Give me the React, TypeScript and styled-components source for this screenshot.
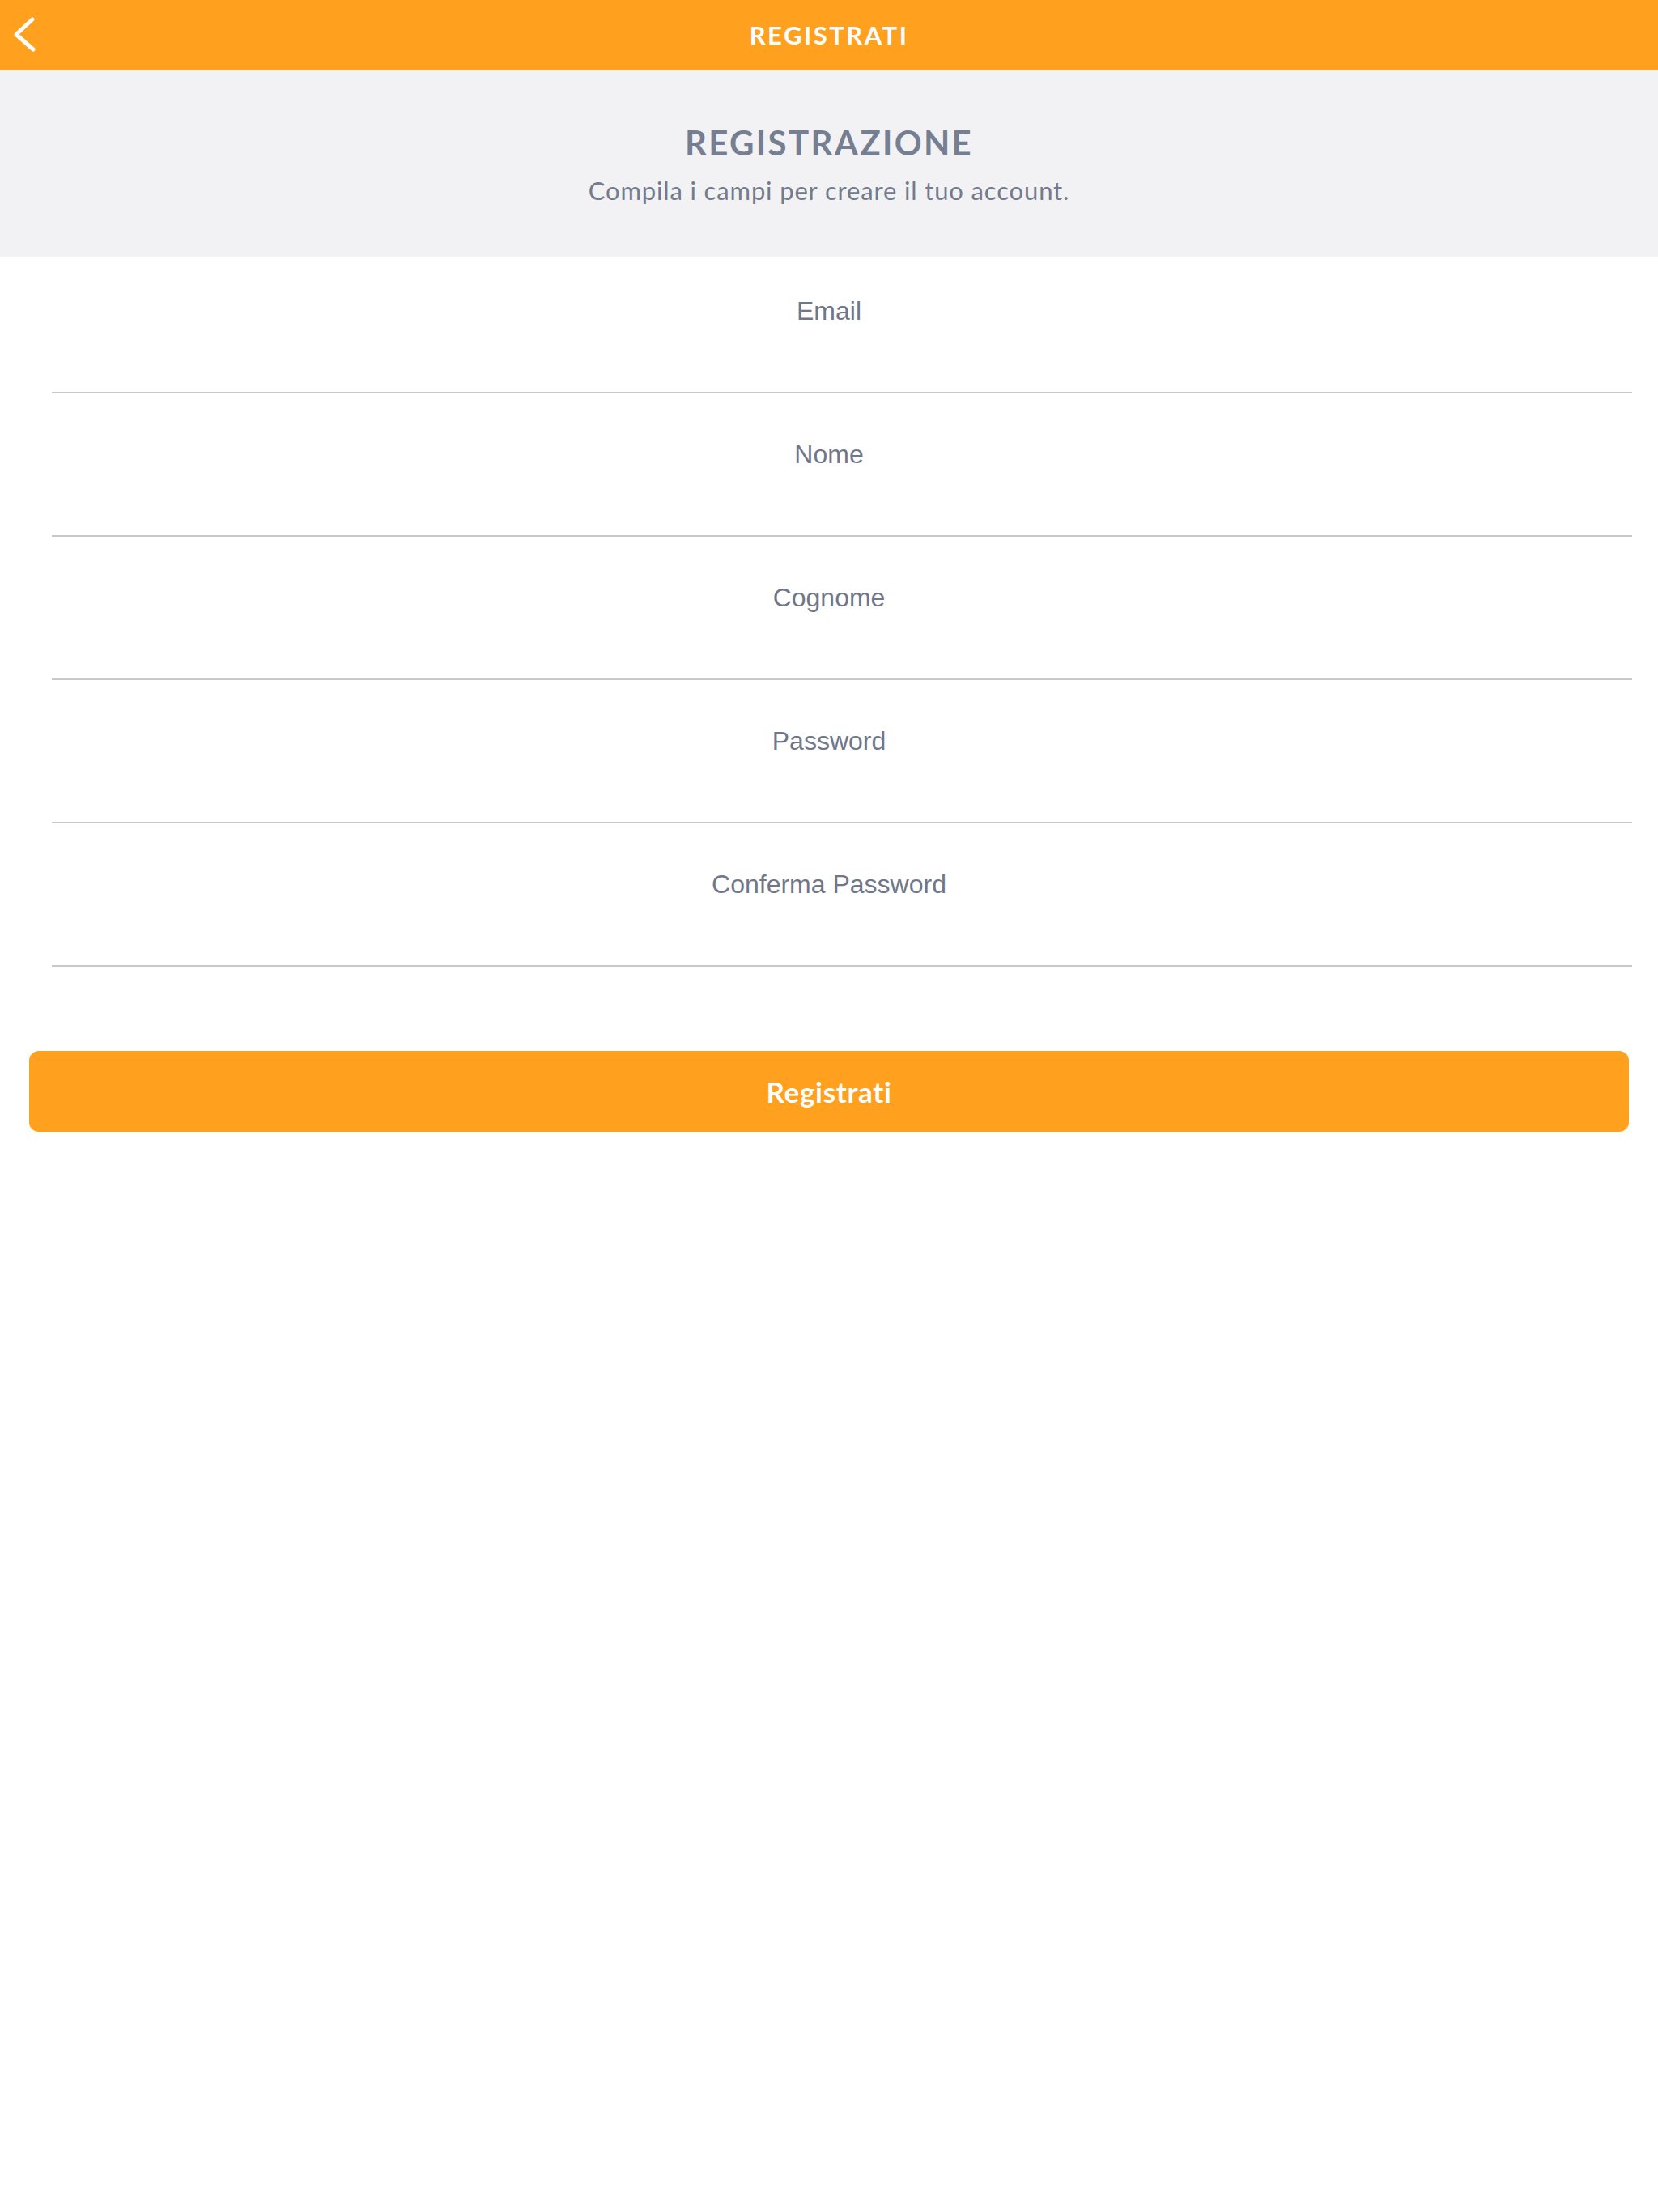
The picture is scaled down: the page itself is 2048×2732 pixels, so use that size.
import React from "react";
import styled, { createGlobalStyle } from "styled-components";

const GlobalStyle = createGlobalStyle`
  html, body {
    margin: 0;
    padding: 0;
    background: #ffffff;
  }
  * { box-sizing: border-box; }
`;

const Page = styled.div`
  width: 2048px;
  min-height: 2732px;
  background: #ffffff;
  display: flex;
  flex-direction: column;
`;

const Toolbar = styled.header`
  height: 87px;
  background: #ffa01e;
  border-bottom: 1px solid #e0891a;
  display: grid;
  grid-template-columns: 1fr auto 1fr;
  align-items: center;
`;

const BackButton = styled.button`
  justify-self: start;
  display: flex;
  align-items: center;
  background: none;
  border: 0;
  padding: 0 0 0 16px;
  margin: 0;
  cursor: pointer;
`;

const ToolbarTitle = styled.h1`
  margin: 0;
  font-family: Lato, "Open Sans", sans-serif;
  font-weight: 700;
  font-size: 31px;
  letter-spacing: 2.5px;
  color: #ffffff;
`;

const Intro = styled.section`
  background: #f2f2f4;
  height: 230px;
  display: flex;
  flex-direction: column;
  align-items: center;
  padding-top: 64px;
`;

const IntroTitle = styled.h2`
  margin: 0;
  font-family: Lato, "Open Sans", sans-serif;
  font-weight: 700;
  font-size: 42px;
  line-height: 50px;
  letter-spacing: 2.3px;
  color: #767f91;
`;

const IntroText = styled.p`
  margin: 14px 0 0;
  font-family: Lato, "Open Sans", sans-serif;
  font-weight: 400;
  font-size: 31px;
  line-height: 40px;
  letter-spacing: 0.85px;
  color: #737b8c;
`;

const Form = styled.form`
  display: flex;
  flex-direction: column;
`;

const Field = styled.div`
  display: flex;
  flex-direction: column;
  padding-top: 57px;
  &:first-child {
    padding-top: 49px;
  }
`;

const Label = styled.label`
  display: block;
  text-align: center;
  font-family: "Liberation Sans", Arial, sans-serif;
  font-size: 32px;
  line-height: 36px;
  color: #6f7789;
`;

const Input = styled.input`
  display: block;
  height: 84px;
  margin: 0 32px 0 64px;
  border: 0;
  border-bottom: 2px solid #c8c7cc;
  background: transparent;
  outline: none;
  font-family: "Liberation Sans", Arial, sans-serif;
  font-size: 32px;
  text-align: center;
  color: #333;
`;

const SubmitButton = styled.button`
  margin: 104px 36px 0;
  height: 100px;
  border: 0;
  border-radius: 12px;
  background: #ffa01e;
  color: #ffffff;
  font-family: Lato, "Open Sans", sans-serif;
  font-weight: 700;
  font-size: 35px;
  letter-spacing: 0.7px;
  cursor: pointer;
`;

const fields = [
  { id: "email", label: "Email", type: "email" },
  { id: "nome", label: "Nome", type: "text" },
  { id: "cognome", label: "Cognome", type: "text" },
  { id: "password", label: "Password", type: "password" },
  { id: "conferma", label: "Conferma Password", type: "password" },
];

export default function App() {
  return (
    <>
      <GlobalStyle />
      <Page>
        <Toolbar>
          <BackButton aria-label="Indietro">
            <svg width="30" height="46" viewBox="0 0 30 46" fill="none">
              <polyline
                points="24,4 4,22.5 25,41"
                stroke="#ffffff"
                strokeWidth="5"
                strokeLinecap="round"
                strokeLinejoin="round"
              />
            </svg>
          </BackButton>
          <ToolbarTitle>REGISTRATI</ToolbarTitle>
          <span />
        </Toolbar>
        <Intro>
          <IntroTitle>REGISTRAZIONE</IntroTitle>
          <IntroText>Compila i campi per creare il tuo account.</IntroText>
        </Intro>
        <Form onSubmit={(e) => e.preventDefault()}>
          {fields.map((f) => (
            <Field key={f.id}>
              <Label htmlFor={f.id}>{f.label}</Label>
              <Input id={f.id} type={f.type} />
            </Field>
          ))}
        </Form>
        <SubmitButton type="button">Registrati</SubmitButton>
      </Page>
    </>
  );
}
